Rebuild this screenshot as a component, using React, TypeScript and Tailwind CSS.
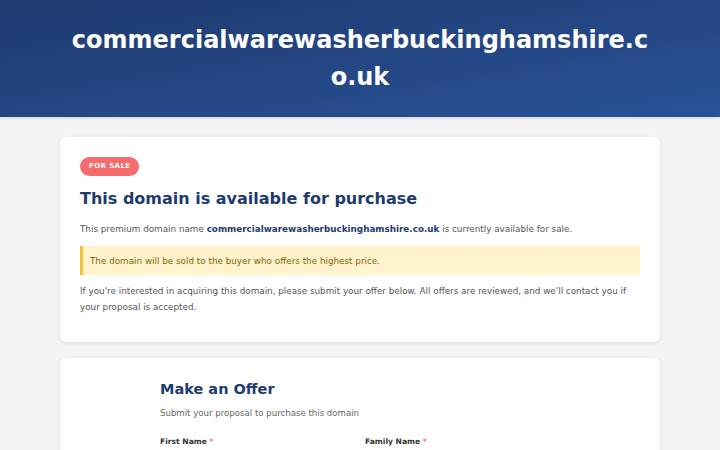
export default function App() {
  return (
    <div className="min-h-screen bg-[#f4f4f4] font-['DejaVu_Sans',sans-serif]">
      {/* Header */}
      <header className="bg-gradient-to-br from-[#1e3a6e] to-[#2a5298] pt-[22px] pb-[21px] shadow-[0_1px_3px_rgba(0,0,0,0.15)]">
        <h1 className="mx-auto w-[585px] break-all text-center text-[24px] font-bold leading-[37px] text-white">
          commercialwarewasherbuckinghamshire.co.uk
        </h1>
      </header>

      <main className="mx-auto w-[600px] pt-[20px] pb-10">
        {/* Sale card */}
        <section className="rounded-[6px] bg-white px-[20px] pt-[20px] pb-[27px] shadow-[0_1px_4px_rgba(0,0,0,0.1)]">
          <span className="flex h-[19px] w-fit items-center rounded-full bg-[#f56c6c] px-[9px] text-[7px] font-bold uppercase tracking-[0.4px] text-white">
            For Sale
          </span>
          <h2 className="mt-[13px] text-[16px] font-bold leading-[20px] text-[#1e3a6e]">
            This domain is available for purchase
          </h2>
          <p className="mt-[12px] text-[8.8px] leading-[16px] text-[#555]">
            This premium domain name{' '}
            <strong className="font-bold text-[#1e3a6e]">commercialwarewasherbuckinghamshire.co.uk</strong>{' '}
            is currently available for sale.
          </p>
          <div className="mt-[9px] flex h-[29px] items-center border-l-[3px] border-[#f2c230] bg-[#fff3cd] pl-[7px] text-[8.8px] leading-[16px] text-[#856404]">
            The domain will be sold to the buyer who offers the highest price.
          </div>
          <p className="mt-[8px] text-[8.8px] leading-[16px] text-[#555]">
            If you're interested in acquiring this domain, please submit your offer below. All offers are reviewed, and we'll contact you if your proposal is accepted.
          </p>
        </section>

        {/* Offer card */}
        <section className="mt-[16px] rounded-[6px] bg-white pt-[21px] pb-[30px] shadow-[0_1px_4px_rgba(0,0,0,0.1)]">
          <div className="mx-auto w-[400px]">
            <h2 className="text-[14.5px] font-bold leading-[20px] text-[#1e3a6e]">Make an Offer</h2>
            <p className="mt-[7px] text-[8.6px] leading-[14px] text-[#666]">
              Submit your proposal to purchase this domain
            </p>
            <div className="mt-[16px] grid grid-cols-2 gap-[10px]">
              <div>
                <label className="block text-[7.6px] font-bold leading-[12px] text-[#333]">
                  First Name <span className="text-[#f56c6c]">*</span>
                </label>
                <input className="mt-[5px] h-[26px] w-full rounded-[4px] border border-[#ddd] px-2 text-[9px]" />
              </div>
              <div>
                <label className="block text-[7.6px] font-bold leading-[12px] text-[#333]">
                  Family Name <span className="text-[#f56c6c]">*</span>
                </label>
                <input className="mt-[5px] h-[26px] w-full rounded-[4px] border border-[#ddd] px-2 text-[9px]" />
              </div>
            </div>
          </div>
        </section>
      </main>
    </div>
  )
}
